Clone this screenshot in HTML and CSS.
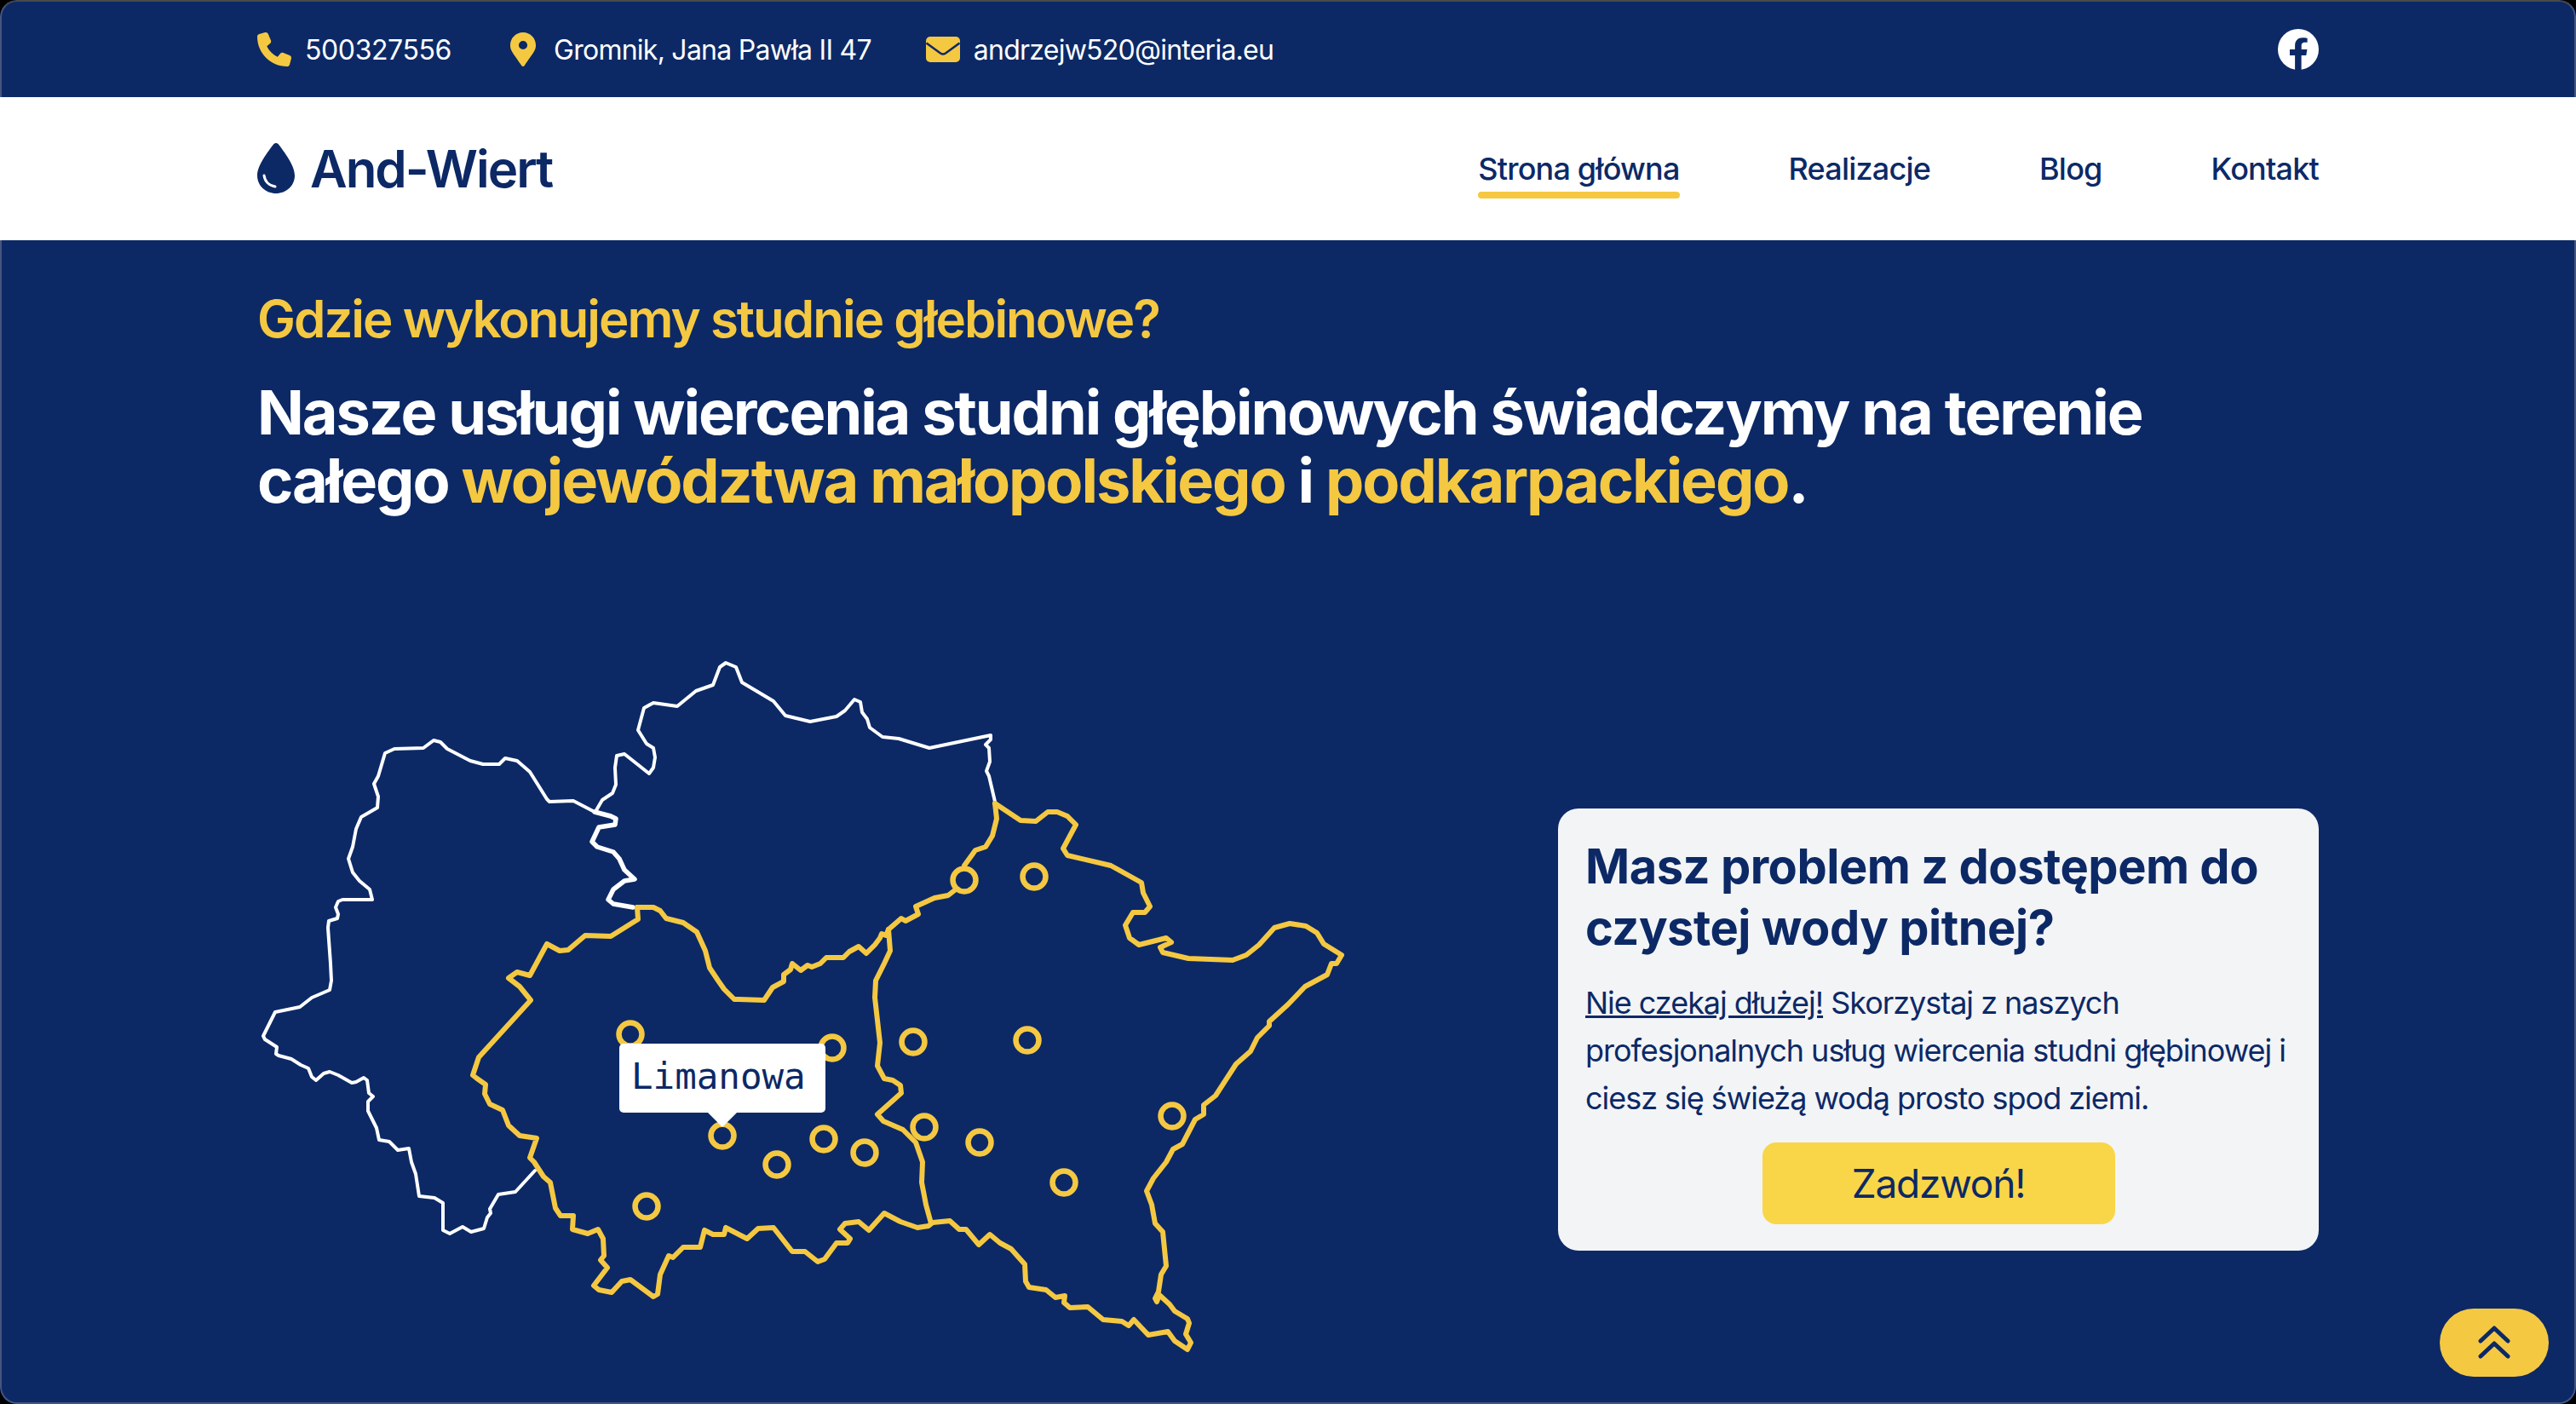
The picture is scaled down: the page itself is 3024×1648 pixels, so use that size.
FILE: index.html
```html
<!DOCTYPE html>
<html lang="pl">
<head>
    <meta charset="UTF-8">
    <meta name="viewport" content="width=device-width, initial-scale=1.0">
    <title>And-Wiert</title>
    <link rel="stylesheet" href="styles.css">
</head>
<body>
<div class="window">
    <!-- TOP BAR -->
    <div class="topbar">
        <div class="wrap topbar-row">
            <div class="contacts">
                <a class="contact contact-phone">
                    <svg class="ico" viewBox="0 0 512 512"><path d="M164.9 24.6c-7.7-18.6-28-28.5-47.4-23.2l-88 24C12.1 30.2 0 46 0 64C0 311.4 200.6 512 448 512c18 0 33.8-12.1 38.6-29.5l24-88c5.300-19.4-4.600-39.7-23.200-47.4l-96-40c-16.300-6.800-35.200-2.100-46.300 11.600L304.700 368C234.300 334.700 177.300 277.700 144 207.300L193.300 167c13.700-11.200 18.400-30 11.600-46.300l-40-96z"/></svg>
                    500327556
                </a>
                <a class="contact">
                    <svg class="ico" viewBox="0 0 384 512"><path fill-rule="evenodd" d="M192 0C86 0 0 86 0 192c0 77.400 27 99 172.300 309.700c9.500 13.700 29.900 13.700 39.400 0C357 291 384 269.400 384 192C384 86 298 0 192 0zM192 257a65 65 0 1 1 0-130a65 65 0 1 1 0 130z"/></svg>
                    Gromnik, Jana Pawła II 47
                </a>
                <a class="contact">
                    <svg class="ico-mail" viewBox="0 0 40 30"><rect width="40" height="30" rx="5" fill="#f5c842"/><path d="M0.5 7.5L17 19.5Q20 21.5 23 19.5L39.5 7.5" fill="none" stroke="#0c2966" stroke-width="2.5"/></svg>
                    andrzejw520@interia.eu
                </a>
            </div>
            <svg class="fb" viewBox="0 0 48 48"><circle cx="24" cy="24" r="24" fill="#fff"/><path fill="#0c2966" d="M33.3 31l1.100-7H27.700v-4.500c0-1.900.9-3.800 3.900-3.800h3V10.800s-2.800-.5-5.400-.5c-5.500 0-9.100 3.300-9.100 9.400V24h-6.100v7h6.100v17h7.500V31z"/></svg>
        </div>
    </div>

    <!-- NAVIGATION -->
    <div class="navbar">
        <div class="wrap navbar-row">
            <a class="logo">
                <svg class="drop" viewBox="0 0 44 60"><path fill="#0c2966" d="M19 1.5C20.5 -.5 23.5 -.5 25 1.5C31 9.5 44 26 44 38C44 50 34 59 22 59C10 59 0 50 0 38C0 26 13 9.5 19 1.5z"/><path fill="none" stroke="#fff" stroke-width="3" stroke-linecap="round" d="M8 38C9 45 14 50 21 51"/></svg>
                And-Wiert
            </a>
            <div class="menu">
                <a class="menu-item active">Strona główna</a>
                <a class="menu-item">Realizacje</a>
                <a class="menu-item">Blog</a>
                <a class="menu-item">Kontakt</a>
            </div>
        </div>
    </div>

    <!-- CONTENT -->
    <div class="wrap content">
        <h2 class="lead">Gdzie wykonujemy studnie głebinowe?</h2>
        <h1 class="title">Nasze usługi wiercenia studni głębinowych świadczymy na terenie całego <span class="hl">województwa małopolskiego</span> i <span class="hl">podkarpackiego</span>.</h1>

        <div class="area">
            <div class="map">
                <svg class="map-svg" viewBox="300 770 1300 830">
                    <g class="line-white">
                        <path d="M698 952L673 939L645 940L642 937L622 905L607 892L593 889L586 896L567 896L552 892L525 878L517 870L509 868L497 877L463 878L452 883L444 910L439 919L444 934L443 947L424 958L418 972L414 993L409 1007L414 1023L422 1033L434 1043L437 1055L402 1055L397 1057L394 1064L397 1072L396 1077L386 1080L385 1088L388 1130L389 1150L387 1161L366 1170L352 1181L323 1187L309 1215L311 1219L325 1228L324 1236L327 1238L342 1242L353 1249L362 1253L366 1263L371 1267L380 1259L387 1257L397 1261L413 1270L418 1269L427 1264L431 1267L433 1282L438 1286L432 1292L432 1303L442 1323L445 1337L457 1339L467 1349L480 1347L483 1363L488 1377L492 1403L510 1405L520 1411L520 1443L528 1447L543 1439L553 1445L568 1441L572 1428L576 1423L575 1418L585 1401L605 1398L628 1373"/>
                        <path d="M700 950L707 938L719 930L723 920L722 900L724 886L733 884L762 907L767 900L769 888L767 877L759 872L749 856L756 830L767 824L795 828L817 810L837 803L845 782L852 777L864 782L871 800L908 822L922 839L951 846L982 840L992 833L1003 820L1010 823L1012 835L1018 843L1021 853L1036 864L1055 866L1091 877L1163 862L1163 867L1157 873L1161 877L1162 893L1158 904L1161 910L1168 940"/>
                        <path class="thick" d="M698 952L717 957L723 960L722 967L703 970L695 987L701 993L720 999L727 1007L733 1020L745 1031L733 1033L720 1043L714 1055L720 1060L743 1064"/>
                    </g>
                    <g class="line-yellow">
                        <path d="M748 1064H767L775 1068L782 1077L802 1082L818 1093L828 1115L833 1135L843 1150L850 1160L862 1172L867 1172L897 1173L907 1158L920 1151L920 1143L928 1137L930 1130L940 1138L948 1132L953 1134L963 1130L970 1123L990 1123L997 1116L1008 1110L1017 1118L1027 1108L1033 1100L1035 1095L1040 1097L1043 1090L1058 1077L1063 1080L1078 1072L1075 1063L1097 1053L1113 1050L1122 1043L1132 1032L1132 1015L1145 997L1157 993L1165 980L1170 960L1168 942"/>
                        <path d="M1168 942L1198 962L1216 963L1230 952L1241 952L1253 957L1263 967L1248 995L1253 1003L1304 1015L1340 1035L1342 1047L1350 1063L1344 1070L1330 1070L1321 1085L1326 1100L1337 1108L1369 1100L1375 1105L1362 1111L1365 1117L1395 1124L1447 1126L1463 1120L1478 1108L1496 1088L1514 1083L1533 1086L1546 1094L1554 1107L1575 1120L1569 1130L1563 1130L1558 1143L1532 1157L1512 1178L1490 1198L1490 1203L1476 1217L1468 1233L1451 1248L1427 1285L1413 1296L1413 1307L1403 1313L1388 1342L1377 1348L1369 1363L1354 1382L1346 1397L1352 1413L1356 1435L1365 1445L1369 1485L1363 1495L1360 1515L1356 1523L1358 1527L1361 1519L1373 1530L1379 1538L1394 1547L1396 1552L1392 1565L1398 1575L1394 1583L1379 1573L1371 1562L1348 1566L1331 1548L1325 1555L1317 1550L1295 1548L1277 1533L1256 1534L1249 1528L1250 1520L1239 1522L1228 1513L1208 1510L1204 1503L1203 1483L1187 1465L1174 1458L1162 1448L1149 1460L1134 1442L1126 1442L1115 1432L1095 1434L1090 1438L1077 1440L1057 1433L1038 1423L1020 1443L1008 1433L992 1435L986 1442L998 1453L995 1458L982 1458L968 1477L960 1480L945 1468L930 1468L908 1440L890 1441L877 1453L852 1440L850 1448L837 1448L827 1443L822 1463L802 1463L790 1475L785 1473L775 1495L772 1518L767 1521L740 1501L730 1503L718 1516L703 1513L697 1508L713 1487L705 1478L709 1473L708 1453L702 1442L690 1447L672 1442L673 1426L658 1426L652 1417L646 1387L638 1380L627 1363L622 1358L630 1335L610 1332L597 1320L590 1302L575 1295L569 1283L570 1272L560 1265L555 1261L562 1240L623 1173L610 1157L597 1147L607 1140L622 1144L642 1107L657 1115L667 1114L687 1097L717 1098L749 1078L748 1064"/>
                        <path d="M1043 1090L1045 1115L1038 1130L1028 1150L1027 1170L1033 1223L1030 1250L1038 1265L1048 1267L1057 1273L1058 1282L1030 1307L1037 1315L1060 1325L1075 1340L1083 1363L1082 1387L1087 1413L1093 1435"/>
                    </g>
                    <g class="towns">
                        <circle cx="740" cy="1213" r="13.5"/>
                        <circle cx="977" cy="1229" r="13.5"/>
                        <circle cx="848" cy="1332" r="13.5"/>
                        <circle cx="967" cy="1336" r="13.5"/>
                        <circle cx="912" cy="1366" r="13.5"/>
                        <circle cx="1015" cy="1352" r="13.5"/>
                        <circle cx="759" cy="1415" r="13.5"/>
                        <circle cx="1072" cy="1222" r="13.5"/>
                        <circle cx="1085" cy="1322" r="13.5"/>
                        <circle cx="1150" cy="1340" r="13.5"/>
                        <circle cx="1132" cy="1032" r="13.5"/>
                        <circle cx="1214" cy="1028" r="13.5"/>
                        <circle cx="1206" cy="1220" r="13.5"/>
                        <circle cx="1376" cy="1309" r="13.5"/>
                        <circle cx="1249" cy="1387" r="13.5"/>
                    </g>
                </svg>
                <div class="tooltip">Limanowa</div>
            </div>

            <div class="card">
                <h3 class="card-title">Masz problem z dostępem do czystej wody pitnej?</h3>
                <p class="card-text"><u>Nie czekaj dłużej!</u> Skorzystaj z naszych profesjonalnych usług wiercenia studni głębinowej i ciesz się świeżą wodą prosto spod ziemi.</p>
                <a class="call">Zadzwoń!</a>
            </div>
        </div>
    </div>

    <a class="totop">
        <svg viewBox="0 0 40 40"><path d="M4 18L20 3L36 18M4 36L20 21L36 36"/></svg>
    </a>
</div>
</body>
</html>
```

FILE: styles.css
```css
/*PAGE AND WINDOW FRAME*/
* {
    box-sizing: border-box;
}
body {
    margin: 0;
    background-color: #000;
}
.window {
    position: relative;
    width: 3024px;
    height: 1648px;
    padding-top: 2px;
    overflow: hidden;
    background-color: #0c2966;
    border-radius: 20px;
    font-family: Inter, "Noto Sans", sans-serif;
    color: #fff;
}
/*THIN LINE ROUND THE WINDOW, THE WHITE BAR LIES OVER IT*/
.window::after {
    content: "";
    position: absolute;
    inset: 0;
    z-index: 1;
    border: 2px solid #46557f;
    border-top-color: #4a4a4a;
    border-radius: 20px;
    pointer-events: none;
}
.wrap {
    width: 2420px;
    margin-left: 302px;
}

/*TOP BAR*/
.topbar {
    height: 112px;
}
.topbar-row {
    display: flex;
    align-items: center;
    justify-content: space-between;
    height: 112px;
}
.contacts {
    display: flex;
    gap: 64px;
}
.contact {
    display: flex;
    align-items: center;
    gap: 16px;
    font-size: 32px;
    letter-spacing: -0.75px;
}
.contact-phone {
    letter-spacing: -0.4px;
}
.ico {
    width: 40px;
    height: 40px;
    fill: #f5c842;
}
.ico-mail {
    width: 40px;
    height: 30px;
}
.fb {
    width: 48px;
    height: 48px;
}

/*NAVIGATION*/
.navbar {
    position: relative;
    z-index: 2;
    height: 168px;
    background-color: #fff;
    color: #0c2966;
}
.navbar-row {
    display: flex;
    align-items: center;
    justify-content: space-between;
    height: 168px;
}
.logo {
    display: flex;
    align-items: center;
    gap: 18px;
    font-size: 60px;
    font-weight: 600;
    letter-spacing: -2px;
}
.drop {
    width: 44px;
    height: 60px;
}
.menu {
    display: flex;
    gap: 128px;
}
.menu-item {
    position: relative;
    font-size: 36px;
    font-weight: 500;
    letter-spacing: -0.8px;
}
.active::after {
    content: "";
    position: absolute;
    left: 0;
    right: 0;
    bottom: -13px;
    height: 8px;
    background-color: #f5c842;
    border-radius: 4px;
}

/*CONTENT*/
.lead {
    margin: 60px 0 0;
    font-size: 60px;
    line-height: 64px;
    font-weight: 600;
    letter-spacing: -2px;
    color: #f5c842;
}
.title {
    margin: 38px 0 0;
    font-size: 72px;
    line-height: 80px;
    font-weight: 700;
    letter-spacing: -2.07px;
}
.hl {
    color: #f5c842;
}
.area {
    display: flex;
    justify-content: space-between;
    margin-top: 167px;
}

/*MAP*/
.map {
    position: relative;
    width: 1300px;
    height: 830px;
    margin-left: -2px;
}
.map-svg {
    display: block;
    width: 1300px;
    height: 830px;
}
.line-white path,
.line-yellow path {
    fill: none;
    stroke-linejoin: round;
    stroke-linecap: round;
}
.line-white path {
    stroke: #fff;
    stroke-width: 4;
}
.line-white .thick {
    stroke-width: 5.5;
}
.line-yellow path {
    stroke: #f5c842;
    stroke-width: 6;
}
.towns circle {
    fill: #0c2966;
    stroke: #f5c842;
    stroke-width: 6.5;
}
.tooltip {
    position: absolute;
    left: 427px;
    top: 454px;
    width: 242px;
    height: 81px;
    padding: 14px 14px;
    background-color: #fff;
    border-radius: 5px;
    color: #0c2966;
    font-family: "DejaVu Sans Mono", monospace;
    font-size: 42.5px;
    line-height: 50px;
}
.tooltip::after {
    content: "";
    position: absolute;
    left: 104px;
    bottom: -17px;
    border-left: 17px solid transparent;
    border-right: 17px solid transparent;
    border-top: 17px solid #fff;
}

/*CARD*/
.card {
    width: 893px;
    height: 519px;
    margin-top: 178px;
    padding: 32px;
    background-color: #f3f4f6;
    border-radius: 24px;
    color: #0c2966;
}
.card-title {
    margin: 0;
    font-size: 56px;
    line-height: 72px;
    font-weight: 700;
    letter-spacing: -0.5px;
}
.card-text {
    margin: 24px 0 0;
    font-size: 36px;
    line-height: 56px;
    letter-spacing: -1.03px;
}
.call {
    display: flex;
    align-items: center;
    justify-content: center;
    width: 414px;
    height: 96px;
    margin: 24px auto 0;
    background-color: #f8d648;
    border-radius: 16px;
    font-size: 46px;
    letter-spacing: -1.2px;
}

/*SCROLL BUTTON*/
.totop {
    position: absolute;
    right: 32px;
    bottom: 32px;
    display: flex;
    align-items: center;
    justify-content: center;
    width: 128px;
    height: 80px;
    background-color: #f5c842;
    border-radius: 40px;
}
.totop svg {
    width: 40px;
    height: 40px;
    fill: none;
    stroke: #0c2966;
    stroke-width: 5;
    stroke-linecap: round;
    stroke-linejoin: round;
}
```
